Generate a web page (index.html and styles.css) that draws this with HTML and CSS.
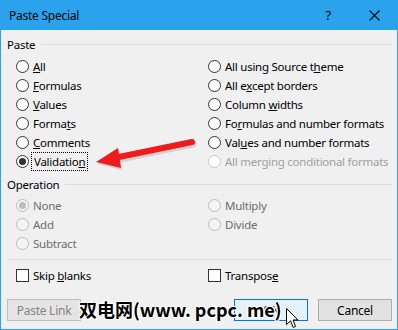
FILE: index.html
```html
<!DOCTYPE html>
<html lang="en">
<head>
    <meta charset="UTF-8">
    <link rel="stylesheet" href="styles.css">
    <title>Paste Special</title>
</head>
<body>
    <div class="window">
        <div class="titlebar">
            <span class="title">Paste Special</span>
            <span class="help">?</span>
            <svg class="close" width="11" height="11" viewBox="0 0 11 11">
                <path d="M0.5 0.5 L10.5 10.5 M10.5 0.5 L0.5 10.5" stroke="#000" stroke-width="1.1"/>
            </svg>
        </div>

        <div class="content">
            <div class="legend"><span>Paste</span><i></i></div>
            <div class="options">
                <label class="opt"><span class="radio"></span><span><u>A</u>ll</span></label>
                <label class="opt"><span class="radio"></span><span>All using Source t<u>h</u>eme</span></label>
                <label class="opt"><span class="radio"></span><span><u>F</u>ormulas</span></label>
                <label class="opt"><span class="radio"></span><span>All e<u>x</u>cept borders</span></label>
                <label class="opt"><span class="radio"></span><span><u>V</u>alues</span></label>
                <label class="opt"><span class="radio"></span><span>Column <u>w</u>idths</span></label>
                <label class="opt"><span class="radio"></span><span>Forma<u>t</u>s</span></label>
                <label class="opt"><span class="radio"></span><span>Fo<u>r</u>mulas and number formats</span></label>
                <label class="opt"><span class="radio"></span><span><u>C</u>omments</span></label>
                <label class="opt"><span class="radio"></span><span>Val<u>u</u>es and number formats</span></label>
                <label class="opt"><span class="radio checked"></span><span class="focus">Validatio<u>n</u></span></label>
                <label class="opt faded"><span class="radio"></span><span>All merging conditional formats</span></label>
            </div>

            <div class="legend op"><span>Operation</span><i></i></div>
            <div class="options disabled">
                <label class="opt"><span class="radio checked"></span><span>None</span></label>
                <label class="opt"><span class="radio"></span><span>Multiply</span></label>
                <label class="opt"><span class="radio"></span><span>Add</span></label>
                <label class="opt"><span class="radio"></span><span>Divide</span></label>
                <label class="opt"><span class="radio"></span><span>Subtract</span></label>
            </div>

            <div class="separator"></div>

            <div class="options checks">
                <label class="opt"><span class="box"></span><span>Skip <u>b</u>lanks</span></label>
                <label class="opt"><span class="box"></span><span>Transpos<u>e</u></span></label>
            </div>

            <div class="buttons">
                <button class="btn off">Paste Link</button>
                <span class="spacer"></span>
                <button class="btn default">OK</button>
                <button class="btn">Cancel</button>
            </div>
        </div>

        <svg class="arrow" width="398" height="330" viewBox="0 0 398 330">
            <line x1="114" y1="158" x2="192" y2="142" stroke="#9a9a9a" stroke-opacity="0.35" stroke-width="7" stroke-linecap="round" transform="translate(1,2)"/>
            <polygon points="96,162 118,148 121,168" fill="#9a9a9a" fill-opacity="0.35" transform="translate(1,2)"/>
            <line x1="114" y1="158" x2="192" y2="142" stroke="#ee1c1c" stroke-width="6" stroke-linecap="round"/>
            <polygon points="96,162 118,148 121,168" fill="#ee1c1c"/>
        </svg>

        <div class="watermark">双电网(www. pcpc. me)</div>

        <svg class="cursor" width="13" height="21" viewBox="0 0 13 21">
            <path d="M0.5 0.5 L0.5 16.5 L4.5 12.8 L7.2 19.5 L9.6 18.5 L7 12 L12 12 Z" fill="#fff" stroke="#000" stroke-width="1"/>
        </svg>
    </div>
</body>
</html>
```

FILE: styles.css
```css
body {
    margin: 0;
    padding: 0;
    background-color: #f0f0f0;
    font-family: "Noto Sans", "Open Sans", sans-serif;
    font-size: 11.5px;
    letter-spacing: -0.25px;
    color: #000;
}

.window {
    position: relative;
    width: 398px;
    height: 330px;
    box-sizing: border-box;
    border: 1px solid #2aa2ec;
    border-top: none;
    background-color: #f0f0f0;
    overflow: hidden;
}

.titlebar {
    height: 30px;
    background-color: #2aa2ec;
    display: flex;
    align-items: center;
    padding-left: 8px;
}

.title {
    flex: 1;
    font-size: 12px;
}

.help {
    font-size: 13px;
    margin-right: 38px;
}

.close {
    margin-right: 17px;
}

.content {
    padding: 6px 5px 0 6px;
}

.legend {
    display: flex;
    align-items: center;
    height: 16px;
}

.legend i {
    flex: 1;
    height: 1px;
    background-color: #dcdcdc;
    margin-left: 6px;
}

.legend.op {
    margin-top: 5px;
}

.options {
    display: grid;
    grid-template-columns: 192px 1fr;
    padding-left: 9px;
    margin-top: 5px;
}

.opt {
    display: flex;
    align-items: center;
    height: 19px;
    white-space: nowrap;
}

.radio {
    flex: none;
    width: 11px;
    height: 11px;
    border: 1px solid #333;
    border-radius: 50%;
    background-color: #fff;
    margin-right: 4px;
    display: flex;
    align-items: center;
    justify-content: center;
}

.radio.checked::after {
    content: "";
    width: 7px;
    height: 7px;
    border-radius: 50%;
    background-color: #333;
}

.focus {
    outline: 1px dotted #000;
    outline-offset: 1px;
    padding: 0 1px;
}

.faded {
    color: #a0a0a0;
}

.faded .radio {
    border-color: #c6c6c6;
}

.disabled {
    color: #6d6d6d;
    margin-top: 4px;
}

.disabled .radio {
    border-color: #bcbcbc;
    background-color: #f4f4f4;
}

.disabled .radio.checked::after {
    background-color: #bcbcbc;
}

.separator {
    height: 1px;
    background-color: #dcdcdc;
    margin: 6px 0 0 0;
}

.checks {
    margin-top: 6px;
}

.box {
    flex: none;
    width: 11px;
    height: 11px;
    border: 1px solid #333;
    background-color: #fff;
    margin-right: 4px;
}

.buttons {
    display: flex;
    margin-top: 14px;
    gap: 10px;
}

.spacer {
    flex: 1;
}

.btn {
    width: 74px;
    height: 22px;
    font-family: inherit;
    font-size: 12px;
    letter-spacing: inherit;
    background-color: #e1e1e1;
    border: 1px solid #adadad;
    padding: 0;
    color: #000;
}

.btn.off {
    background-color: #e4e4e4;
    border-color: #bfbfbf;
    color: #838383;
}

.btn.default {
    background-color: #e5f1fb;
    border-color: #0078d7;
}

.arrow {
    position: absolute;
    left: -1px;
    top: 0;
    pointer-events: none;
}

.watermark {
    position: absolute;
    left: 78px;
    top: 296px;
    font-family: "Noto Sans CJK SC", sans-serif;
    font-weight: bold;
    font-size: 18px;
    letter-spacing: 0;
    color: #000;
    text-shadow: 1px 0 #fff, -1px 0 #fff, 0 1px #fff, 0 -1px #fff, 1px 1px #fff, -1px -1px #fff, 1px -1px #fff, -1px 1px #fff;
    white-space: nowrap;
}

.cursor {
    position: absolute;
    left: 285px;
    top: 308px;
}
```
